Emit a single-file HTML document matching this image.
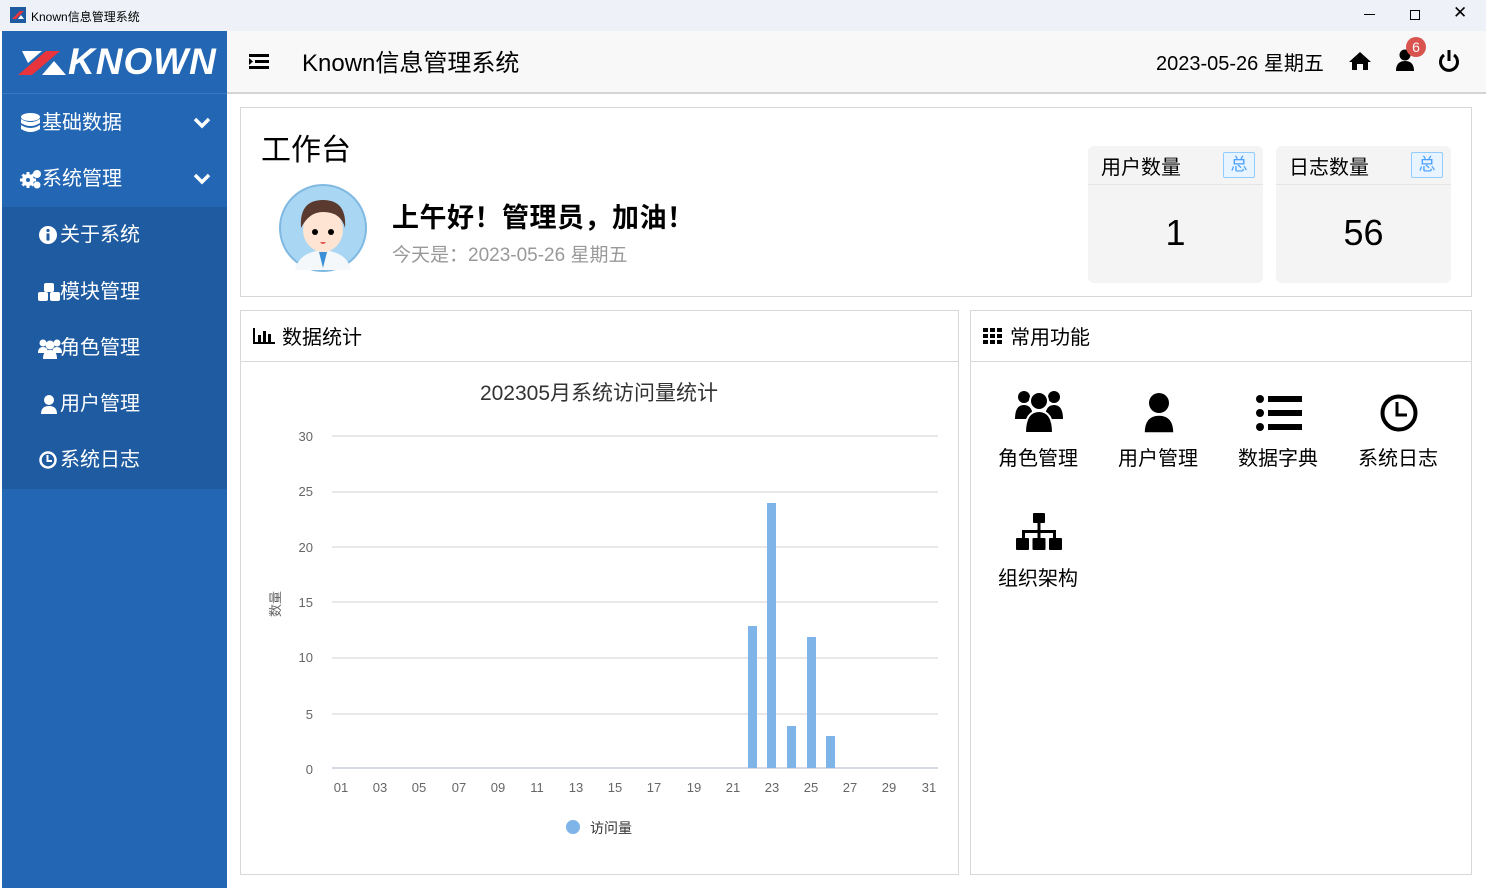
<!DOCTYPE html>
<html><head><meta charset="utf-8"><style>
*{margin:0;padding:0;box-sizing:border-box}
body{width:1486px;height:888px;overflow:hidden;font-family:"Liberation Sans","Noto Sans CJK SC",sans-serif;background:#fff;position:relative}
.abs{position:absolute}
.title{left:0;top:0;width:1486px;height:31px;background:#eef2f8;font-size:12px;color:#000}
.side{left:2px;top:31px;width:225px;height:857px;background:#2266b4;color:#fff}
.menu{position:absolute;left:0;width:225px;height:56px;font-size:20px;line-height:56px}
.menu svg{position:absolute}
.menu span{position:absolute;left:60px;top:0}
.sub{background:#1f5ba0}
.top{left:227px;top:31px;width:1259px;height:63px;background:#f8f8f8;border-bottom:2px solid #d4d4d4}
.box{border:1px solid #d8d8d8;background:#fff}
.stat{background:#f4f4f4;border-radius:6px}
.chip{position:absolute;right:8px;top:6px;width:32px;height:26px;border:1px solid #91cbff;background:#e8f4ff;color:#4aa0ff;font-size:17px;text-align:center;line-height:24px;border-radius:2px}
.fi{position:absolute;width:120px;text-align:center;font-size:20px}
</style></head><body>
<div class="abs title">
 <svg class="abs" style="left:10px;top:7px" width="16" height="16"><rect width="16" height="16" fill="#1f5ba0"/><path d="M2 12 L10 4 L14 4 L6 12Z" fill="#e8343c"/><path d="M8 12 L11 8 L14 12Z" fill="#fff"/></svg>
 <span class="abs" style="left:31px;top:8px">Known信息管理系统</span>
 <span class="abs" style="left:1364px;top:14px;width:11px;height:1px;background:#000"></span>
 <span class="abs" style="left:1410px;top:10px;width:10px;height:10px;border:1px solid #000"></span>
 <span class="abs" style="left:1453px;top:3px;font-size:17px">✕</span>
</div>
<div class="abs side">
 <div class="abs" style="left:0;top:0;width:225px;height:63px;border-bottom:1px solid #3b78c0">
  <svg class="abs" style="left:16px;top:16px" width="50" height="30"><path d="M0 28 L28 4 L42 4 L14 28Z" fill="#e8343c"/><path d="M4 4 L24 4 L10 16Z" fill="#fff"/><path d="M24 28 L36 14 L48 28Z" fill="#fff"/></svg>
  <span class="abs" style="left:66px;top:10px;font-size:37px;font-weight:bold;font-style:italic;letter-spacing:1px">KNOWN</span>
 </div>
 <div class="menu" style="top:64px">
  <svg style="left:19px;top:18px" width="19" height="21" fill="#fff"><ellipse cx="9.5" cy="4" rx="9.5" ry="4"/><path d="M0 6 Q9.5 12 19 6 V10 Q9.5 16 0 10Z"/><path d="M0 12 Q9.5 18 19 12 V16 Q9.5 22 0 16Z"/></svg>
  <span style="left:40px">基础数据</span>
  <svg style="left:191px;top:22px" width="18" height="12"><path d="M2 2 L9 9 L16 2" fill="none" stroke="#fff" stroke-width="3.5"/></svg></div>
 <div class="menu" style="top:120px">
  <svg style="left:18px;top:18px" width="22" height="20" fill="#fff"><circle cx="8" cy="11" r="6"/><circle cx="8" cy="11" r="2" fill="#2266b4"/><circle cx="17" cy="5" r="4"/><circle cx="17" cy="16" r="3.5"/><g stroke="#fff" stroke-width="3"><line x1="8" y1="3" x2="8" y2="19"/><line x1="0" y1="11" x2="16" y2="11"/><line x1="2.5" y1="5.5" x2="13.5" y2="16.5"/><line x1="2.5" y1="16.5" x2="13.5" y2="5.5"/></g><circle cx="8" cy="11" r="2" fill="#2266b4"/></svg>
  <span style="left:40px">系统管理</span>
  <svg style="left:191px;top:22px" width="18" height="12"><path d="M2 2 L9 9 L16 2" fill="none" stroke="#fff" stroke-width="3.5"/></svg></div>
 <div class="abs sub" style="left:0;top:176px;width:225px;height:282px"></div>
 <div class="menu" style="top:176px"><svg style="left:37px;top:19px" width="18" height="18"><circle cx="9" cy="9" r="9" fill="#fff"/><rect x="7.5" y="7.5" width="3" height="7" fill="#1f5ba0"/><circle cx="9" cy="4.5" r="1.6" fill="#1f5ba0"/></svg><span style="left:58px">关于系统</span></div>
 <div class="menu" style="top:233px"><svg style="left:36px;top:19px" width="24" height="20" fill="#fff"><rect x="6" y="0" width="10" height="9" rx="2"/><rect x="0" y="9" width="10" height="9" rx="2"/><rect x="12" y="9" width="10" height="9" rx="2"/></svg><span style="left:58px">模块管理</span></div>
 <div class="menu" style="top:289px"><svg style="left:36px;top:19px" width="24" height="20" fill="#fff"><circle cx="5" cy="4" r="3.5"/><circle cx="19" cy="4" r="3.5"/><path d="M0 14 Q0 8 5 8 Q10 8 10 14Z"/><path d="M14 14 Q14 8 19 8 Q24 8 24 14Z"/><circle cx="12" cy="6" r="4.5"/><path d="M5 20 Q5 11 12 11 Q19 11 19 20Z"/></svg><span style="left:58px">角色管理</span></div>
 <div class="menu" style="top:345px"><svg style="left:39px;top:19px" width="16" height="19" fill="#fff"><circle cx="8" cy="5" r="5"/><path d="M0 19 Q0 11 8 11 Q16 11 16 19Z"/></svg><span style="left:58px">用户管理</span></div>
 <div class="menu" style="top:401px"><svg style="left:37px;top:19px" width="18" height="18"><circle cx="9" cy="9" r="7.5" fill="none" stroke="#fff" stroke-width="2.5"/><path d="M8.5 4 V10 H13" fill="none" stroke="#fff" stroke-width="2"/></svg><span style="left:58px">系统日志</span></div>
</div>
<div class="abs top">
 <svg class="abs" style="left:22px;top:23px" width="20" height="16"><rect x="0" y="0" width="20" height="3"/><rect x="6" y="6" width="14" height="3"/><rect x="0" y="12" width="20" height="3"/><path d="M0 4 L4 7.5 L0 11Z"/></svg>
 <span class="abs" style="left:75px;top:12px;font-size:24px">Known信息管理系统</span>
 <span class="abs" style="left:929px;top:16px;font-size:20px">2023-05-26 星期五</span>
 <svg class="abs" style="left:1122px;top:20px" width="22" height="20"><path d="M11 1 L22 11 L19 11 L19 19 L14 19 L14 13 L8 13 L8 19 L3 19 L3 11 L0 11Z"/></svg>
 <svg class="abs" style="left:1168px;top:18px" width="20" height="22"><circle cx="10" cy="6" r="5.5"/><path d="M1 22 Q1 12 10 12 Q19 12 19 22Z"/></svg>
 <span class="abs" style="left:1179px;top:6px;width:20px;height:20px;border-radius:50%;background:#d9534f;color:#fff;font-size:14px;text-align:center;line-height:20px">6</span>
 <svg class="abs" style="left:1211px;top:19px" width="22" height="22"><path d="M6 5 A8.5 8.5 0 1 0 16 5" fill="none" stroke="#000" stroke-width="3"/><rect x="9.5" y="0" width="3" height="11"/></svg>
</div>
<div class="abs box" style="left:240px;top:107px;width:1232px;height:190px">
 <span class="abs" style="left:20px;top:17px;font-size:30px">工作台</span>
 <svg class="abs" style="left:38px;top:76px" width="88" height="88"><circle cx="44" cy="44" r="43" fill="#a9d6f3" stroke="#7fb8e0" stroke-width="2"/><path d="M16 86 Q20 68 44 66 Q68 68 72 86Z" fill="#f4f8fb"/><path d="M40 68 L44 84 L48 68Z" fill="#3a8fd6"/><ellipse cx="44" cy="46" rx="20" ry="22" fill="#fde4d3"/><path d="M22 44 Q20 16 44 16 Q68 16 66 44 Q62 28 44 28 Q30 28 22 44Z" fill="#5a3a2e"/><circle cx="36" cy="48" r="3"/><circle cx="52" cy="48" r="3"/><path d="M41 58 Q44 62 47 58Z" fill="#e8504a"/></svg>
 <span class="abs" style="left:151px;top:88px;font-size:27px;font-weight:bold;letter-spacing:0.5px">上午好！管理员，加油！</span>
 <span class="abs" style="left:151px;top:132px;font-size:19px;color:#999">今天是：2023-05-26 星期五</span>
 <div class="abs stat" style="left:847px;top:38px;width:175px;height:137px"><span class="abs" style="left:13px;top:5px;font-size:20px">用户数量</span><div class="chip">总</div><div class="abs" style="left:0;top:38px;width:175px;height:1px;background:#e4e4e4"></div><span class="abs" style="left:0;top:66px;width:175px;text-align:center;font-size:36px">1</span></div>
 <div class="abs stat" style="left:1035px;top:38px;width:175px;height:137px"><span class="abs" style="left:13px;top:5px;font-size:20px">日志数量</span><div class="chip">总</div><div class="abs" style="left:0;top:38px;width:175px;height:1px;background:#e4e4e4"></div><span class="abs" style="left:0;top:66px;width:175px;text-align:center;font-size:36px">56</span></div>
</div>
<div class="abs box" style="left:240px;top:310px;width:719px;height:565px">
 <div class="abs" style="left:0;top:0;width:717px;height:51px;border-bottom:1px solid #d8d8d8"></div>
 <svg class="abs" style="left:12px;top:17px" width="22" height="17"><rect x="0" y="0" width="2" height="16"/><rect x="0" y="14" width="22" height="2"/><rect x="5" y="7" width="3" height="7"/><rect x="10" y="3" width="3" height="11"/><rect x="15" y="6" width="3" height="8"/></svg>
 <span class="abs" style="left:41px;top:10px;font-size:20px">数据统计</span>
</div>
<svg class="abs" style="left:241px;top:362px" width="717" height="512" font-family="Liberation Sans, Noto Sans CJK SC, sans-serif">
 <text x="358" y="38" text-anchor="middle" font-size="21" fill="#333">202305月系统访问量统计</text>
 <g stroke="#e8e8e8" stroke-width="2">
  <line x1="91" y1="74" x2="697" y2="74"/><line x1="91" y1="130" x2="697" y2="130"/><line x1="91" y1="185" x2="697" y2="185"/><line x1="91" y1="240" x2="697" y2="240"/><line x1="91" y1="296" x2="697" y2="296"/><line x1="91" y1="352" x2="697" y2="352"/>
 </g>
 <line x1="91" y1="406" x2="697" y2="406" stroke="#d6dae6" stroke-width="2"/>
 <g font-size="13" fill="#666" text-anchor="end">
  <text x="72" y="79">30</text><text x="72" y="134">25</text><text x="72" y="190">20</text><text x="72" y="245">15</text><text x="72" y="300">10</text><text x="72" y="357">5</text><text x="72" y="412">0</text>
 </g>
 <text transform="translate(39,242) rotate(-90)" font-size="13" fill="#666" text-anchor="middle">数量</text>
 <g font-size="13" fill="#666" text-anchor="middle">
  <text x="100" y="430">01</text><text x="139" y="430">03</text><text x="178" y="430">05</text><text x="218" y="430">07</text><text x="257" y="430">09</text><text x="296" y="430">11</text><text x="335" y="430">13</text><text x="374" y="430">15</text><text x="413" y="430">17</text><text x="453" y="430">19</text><text x="492" y="430">21</text><text x="531" y="430">23</text><text x="570" y="430">25</text><text x="609" y="430">27</text><text x="648" y="430">29</text><text x="688" y="430">31</text>
 </g>
 <g fill="#7eb4e8">
  <rect x="507" y="264" width="9" height="142"/><rect x="526" y="141" width="9" height="265"/><rect x="546" y="364" width="9" height="42"/><rect x="566" y="275" width="9" height="131"/><rect x="585" y="374" width="9" height="32"/>
 </g>
 <circle cx="332" cy="465" r="7" fill="#7eb4e8"/>
 <text x="349" y="471" font-size="14" fill="#333">访问量</text>
</svg>
<div class="abs box" style="left:970px;top:310px;width:502px;height:565px">
 <div class="abs" style="left:0;top:0;width:500px;height:51px;border-bottom:1px solid #d8d8d8"></div>
 <svg class="abs" style="left:12px;top:17px" width="20" height="16"><g><rect x="0" y="0" width="5" height="4"/><rect x="7" y="0" width="5" height="4"/><rect x="14" y="0" width="5" height="4"/><rect x="0" y="6" width="5" height="4"/><rect x="7" y="6" width="5" height="4"/><rect x="14" y="6" width="5" height="4"/><rect x="0" y="12" width="5" height="4"/><rect x="7" y="12" width="5" height="4"/><rect x="14" y="12" width="5" height="4"/></g></svg>
 <span class="abs" style="left:39px;top:10px;font-size:20px">常用功能</span>
 <svg class="abs" style="left:43px;top:78px" width="50" height="46"><circle cx="10" cy="8" r="6"/><circle cx="40" cy="8" r="6"/><path d="M1 30 Q1 16 10 16 Q19 16 19 30Z"/><path d="M31 30 Q31 16 40 16 Q49 16 49 30Z"/><circle cx="25" cy="12" r="9" stroke="#fff" stroke-width="2"/><path d="M11 44 Q11 22 25 22 Q39 22 39 44Z" stroke="#fff" stroke-width="2"/></svg>
 <svg class="abs" style="left:172px;top:82px" width="32" height="40"><circle cx="16" cy="10" r="10"/><path d="M1 40 Q1 22 16 22 Q31 22 31 40Z" stroke="#fff" stroke-width="1.5"/></svg>
 <svg class="abs" style="left:285px;top:84px" width="46" height="36"><circle cx="4" cy="4" r="4"/><circle cx="4" cy="18" r="4"/><circle cx="4" cy="32" r="4"/><rect x="12" y="1" width="34" height="6"/><rect x="12" y="15" width="34" height="6"/><rect x="12" y="29" width="34" height="6"/></svg>
 <svg class="abs" style="left:409px;top:83px" width="38" height="38"><circle cx="19" cy="19" r="16.5" fill="none" stroke="#000" stroke-width="4"/><path d="M17 8 V21 H27" fill="none" stroke="#000" stroke-width="3"/></svg>
 <svg class="abs" style="left:45px;top:202px" width="46" height="38"><rect x="17" y="0" width="12" height="10" rx="1"/><rect x="21.5" y="9" width="3" height="10"/><rect x="6" y="17" width="34" height="3"/><rect x="6" y="17" width="3" height="10"/><rect x="37" y="17" width="3" height="10"/><rect x="21.5" y="17" width="3" height="10"/><rect x="0" y="25" width="13" height="12" rx="1"/><rect x="16.5" y="25" width="13" height="12" rx="1"/><rect x="33" y="25" width="13" height="12" rx="1"/></svg>
 <div class="fi" style="left:7px;top:131px">角色管理</div>
 <div class="fi" style="left:127px;top:131px">用户管理</div>
 <div class="fi" style="left:247px;top:131px">数据字典</div>
 <div class="fi" style="left:367px;top:131px">系统日志</div>
 <div class="fi" style="left:7px;top:251px">组织架构</div>
</div>
</body></html>
